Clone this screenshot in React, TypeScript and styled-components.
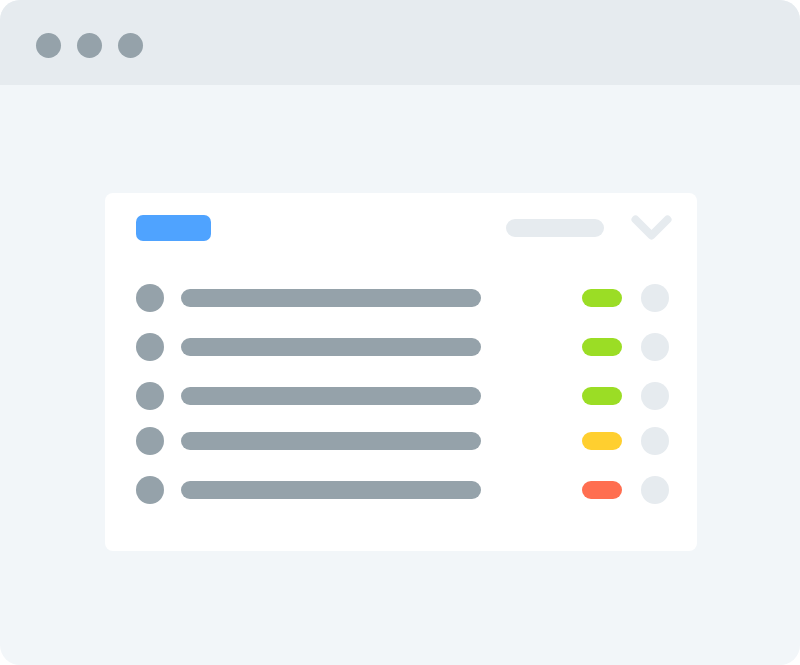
import React from 'react';
import styled, { createGlobalStyle } from 'styled-components';

const GlobalStyle = createGlobalStyle`
	html, body {
		margin: 0;
		padding: 0;
		background: #ffffff;
	}
`;

const rows = [
	{ status: '#9bdd25', gap: 0 },
	{ status: '#9bdd25', gap: 21 },
	{ status: '#9bdd25', gap: 21 },
	{ status: '#ffcf2f', gap: 17 },
	{ status: '#ff6e50', gap: 21 },
];

export default () => {
	return (
		<>
			<GlobalStyle />
			<Window>
				<TitleBar>
					<Dot />
					<Dot />
					<Dot />
				</TitleBar>
				<Body>
					<Card>
						<CardHeader>
							<Pill color="#4fa3ff" width={75} height={26} radius={7} />
							<HeaderRight>
								<Pill color="#e6ebef" width={98} height={18} radius={9} />
								<Chevron viewBox="0 0 41 26" width={41} height={26}>
									<path
										d="M4.5 4.5 L20.5 20.5 L36.5 4.5"
										fill="none"
										stroke="#e6ebef"
										strokeWidth={8}
										strokeLinecap="round"
										strokeLinejoin="round"
									/>
								</Chevron>
							</HeaderRight>
						</CardHeader>
						<List>
							{rows.map((row, i) => (
								<Row key={i} gap={row.gap}>
									<Circle color="#95a2aa" />
									<Bar />
									<Spacer />
									<Status color={row.status} width={40} height={18} radius={9} />
									<Circle color="#e6ebef" />
								</Row>
							))}
						</List>
					</Card>
				</Body>
			</Window>
		</>
	);
};

const Window = styled.div`
	width: 800px;
	height: 665px;
	border-radius: 20px;
	overflow: hidden;
	display: flex;
	flex-direction: column;
	background: #f2f6f9;
`;

const TitleBar = styled.div`
	height: 85px;
	flex-shrink: 0;
	background: #e6ebef;
	display: flex;
	align-items: center;
	gap: 16px;
	padding-left: 36px;
	padding-top: 5px;
	box-sizing: border-box;
`;

const Dot = styled.span`
	width: 25px;
	height: 25px;
	border-radius: 50%;
	background: #95a2aa;
`;

const Body = styled.div`
	flex: 1;
	padding: 108px 103px 0 105px;
`;

const Card = styled.div`
	width: 592px;
	height: 358px;
	box-sizing: border-box;
	background: #ffffff;
	border-radius: 8px;
	padding: 22px 28px 0 31px;
`;

const CardHeader = styled.div`
	display: flex;
	align-items: center;
	justify-content: space-between;
	height: 26px;
	margin-right: -3px;
`;

const HeaderRight = styled.div`
	display: flex;
	align-items: center;
	gap: 27px;
`;

const Chevron = styled.svg`
	display: block;
`;

const Pill = styled.span<{ color: string; width: number; height: number; radius: number }>`
	display: block;
	width: ${({ width }) => width}px;
	height: ${({ height }) => height}px;
	border-radius: ${({ radius }) => radius}px;
	background: ${({ color }) => color};
`;

const Status = styled(Pill)`
	margin-right: 2px;
`;

const List = styled.div`
	display: flex;
	flex-direction: column;
	margin-top: 43px;
`;

const Row = styled.div<{ gap: number }>`
	display: flex;
	align-items: center;
	height: 28px;
	margin-top: ${({ gap }) => gap}px;
	gap: 17px;
`;

const Circle = styled.span<{ color: string }>`
	width: 28px;
	height: 28px;
	flex-shrink: 0;
	border-radius: 50%;
	background: ${({ color }) => color};
`;

const Bar = styled.span`
	width: 300px;
	height: 18px;
	border-radius: 9px;
	background: #95a2aa;
`;

const Spacer = styled.span`
	flex: 1;
`;
